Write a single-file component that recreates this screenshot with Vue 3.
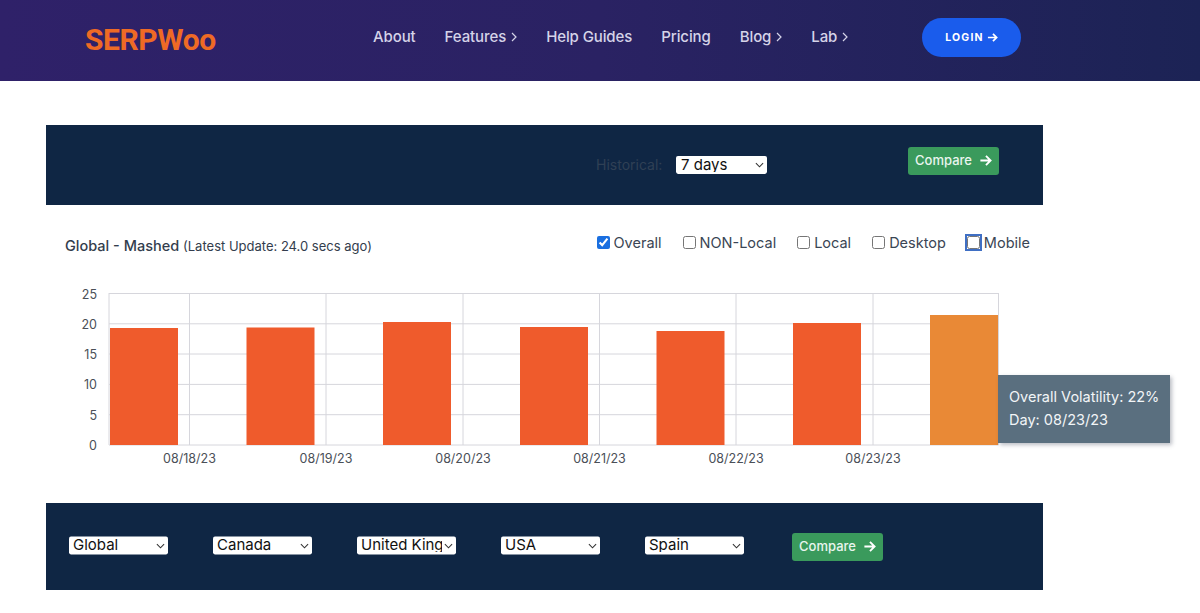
<script setup>
const nav = [
  { label: 'About' },
  { label: 'Features', more: true },
  { label: 'Help Guides' },
  { label: 'Pricing' },
  { label: 'Blog', more: true },
  { label: 'Lab', more: true }
]
const checks = [
  { label: 'Overall', checked: true },
  { label: 'NON-Local' },
  { label: 'Local' },
  { label: 'Desktop' },
  { label: 'Mobile', focus: true }
]
const countries = ['Global', 'Canada', 'United Kingdom', 'USA', 'Spain']
const gridY = [
  { y: 293.5, t: '25' }, { y: 323.8, t: '20' }, { y: 354, t: '15' },
  { y: 384.4, t: '10' }, { y: 414.7, t: '5' }, { y: 445, t: '0' }
]
const gridX = [
  { x: 189.5, t: '08/18/23' }, { x: 326, t: '08/19/23' }, { x: 463, t: '08/20/23' },
  { x: 599.5, t: '08/21/23' }, { x: 736, t: '08/22/23' }, { x: 873, t: '08/23/23' }
]
const bars = [
  { x: 110, top: 328 }, { x: 246.5, top: 327.5 }, { x: 383, top: 322 }, { x: 520, top: 327 },
  { x: 656.5, top: 331 }, { x: 793, top: 323 }, { x: 930, top: 315, hot: true }
]
</script>

<template>
  <div class="page">
    <header class="top">
      <div class="logo">SERPWoo</div>
      <nav class="nav">
        <a v-for="n in nav" :key="n.label" class="nav-link">
          {{ n.label }}
          <svg v-if="n.more" class="caret" viewBox="0 0 6 10" width="6" height="10"><path d="M1 1l4 4-4 4" fill="none" stroke="currentColor" stroke-width="1.2" /></svg>
        </a>
      </nav>
      <button class="login">LOGIN
        <svg viewBox="0 0 12 12" width="11" height="11"><path d="M1 6h9M6.5 2l4 4-4 4" fill="none" stroke="#fff" stroke-width="1.9" /></svg>
      </button>
    </header>

    <main class="main">
      <section class="panel panel-top">
        <span class="hist">Historical:</span>
        <span class="sel sel-hist">
          <select><option>7 days</option></select>
          <svg class="chev" viewBox="0 0 10 6" width="9" height="6"><path d="M1 1l4 4 4-4" fill="none" stroke="#333" stroke-width="1.2" /></svg>
        </span>
        <button class="compare compare-top">Compare
          <svg viewBox="0 0 14 14" width="13" height="13"><path d="M1.5 7h10.5M7.5 2l5 5-5 5" fill="none" stroke="#fff" stroke-width="2" /></svg>
        </button>
      </section>

      <section class="chart-card">
        <div class="chart-head">
          <div class="title">Global - Mashed <small>(Latest Update: 24.0 secs ago)</small></div>
          <div class="checks">
            <label v-for="c in checks" :key="c.label" class="check" :class="{ focus: c.focus }">
              <input type="checkbox" :checked="c.checked" />{{ c.label }}
            </label>
          </div>
        </div>
        <svg class="chart" viewBox="46 280 997 190" width="997" height="190">
          <line v-for="g in gridY" :key="g.t" x1="109" x2="998.5" :y1="g.y" :y2="g.y" class="grid" />
          <line x1="109" x2="109" y1="293" y2="445" class="grid" />
          <line x1="998.5" x2="998.5" y1="293" y2="445" class="grid" />
          <line v-for="g in gridX" :key="g.t" :x1="g.x" :x2="g.x" y1="293" y2="445" class="grid" />
          <rect v-for="b in bars" :key="b.x" :x="b.x" :y="b.top" width="68" :height="445 - b.top" :fill="b.hot ? '#e98936' : '#ef5b2c'" />
          <text v-for="g in gridY" :key="'l' + g.t" x="97" :y="g.y + 5" text-anchor="end" class="tick">{{ g.t }}</text>
          <text v-for="g in gridX" :key="'x' + g.t" :x="g.x" y="463" text-anchor="middle" class="tick">{{ g.t }}</text>
        </svg>
        <div class="tooltip">
          <div>Overall Volatility: 22%</div>
          <div>Day: 08/23/23</div>
        </div>
      </section>

      <section class="panel panel-bottom">
        <span v-for="c in countries" :key="c" class="sel sel-country">
          <select><option>{{ c }}</option></select>
          <svg class="chev" viewBox="0 0 10 6" width="9" height="6"><path d="M1 1l4 4 4-4" fill="none" stroke="#333" stroke-width="1.2" /></svg>
        </span>
        <button class="compare compare-bottom">Compare
          <svg viewBox="0 0 14 14" width="13" height="13"><path d="M1.5 7h10.5M7.5 2l5 5-5 5" fill="none" stroke="#fff" stroke-width="2" /></svg>
        </button>
      </section>
    </main>
  </div>
</template>

<style>
html, body { margin: 0; background: #fff; overflow: hidden; }
</style>

<style scoped>
.page { width: 1200px; height: 613px; font-family: Inter, "Open Sans", sans-serif; color: #333d4d; overflow: hidden; }
.top {
  height: 81px; box-sizing: border-box; display: flex; align-items: center;
  padding-left: 85px;
  background: linear-gradient(90deg, #2f2169 0%, #2a2263 50%, #1c2355 100%);
}
.logo { font-family: Roboto, sans-serif; font-weight: 700; font-size: 30px; color: #ee6a25; width: 288px; letter-spacing: -0.4px; margin-bottom: 2px; }
.nav { display: flex; gap: 29px; margin-bottom: 9px; }
.nav-link { display: flex; align-items: center; gap: 5px; font-size: 15px; font-weight: 500; color: #d5d3e8; white-space: nowrap; letter-spacing: -0.1px; }
.caret { margin-top: 1px; }
.login {
  position: absolute; left: 922px; top: 18px; width: 99px; height: 39px; border: 0; border-radius: 20px;
  background: #1a5cec; color: #fff; font: 700 10.5px Inter, sans-serif; letter-spacing: 1.2px;
  display: flex; align-items: center; justify-content: center; gap: 3px;
}
.main { width: 997px; margin-left: 46px; padding-top: 44px; }
.panel { background: #0f2644; display: flex; align-items: center; box-sizing: border-box; }
.panel-top { height: 80px; padding-left: 550px; }
.hist { font-size: 14px; color: #2f4055; width: 80px; padding-bottom: 1px; }
.sel { position: relative; display: block; }
.sel select {
  display: block; width: 100%; height: 20px; margin: -2px 0 0; box-sizing: border-box; appearance: none; border: 0; border-radius: 2px;
  clip-path: inset(2px 0 0 0 round 2px);
  background: #fff; color: #111; font: 400 15px/1 Inter, sans-serif; padding: 0 14px 0 5px; overflow: hidden;
}
.chev { position: absolute; right: 3.5px; top: 6px; pointer-events: none; }
.sel-hist { width: 91px; height: 18px; }
.compare {
  width: 91px; height: 28px; border: 0; border-radius: 3px; background: #3a9a5c; color: #e9f5ee;
  font: 500 13px Inter, sans-serif; display: flex; align-items: center; justify-content: center; gap: 7px; padding: 0 0 1px;
}
.compare-top { margin-left: 141px; margin-top: -9px; }
.chart-card { position: relative; height: 298px; }
.chart-head { height: 75px; box-sizing: border-box; display: flex; justify-content: space-between; padding: 28px 13px 0 19px; }
.title { font-size: 14.5px; font-weight: 500; color: #333d4d; padding-top: 4px; }
.title small { font-size: 13px; font-weight: 400; }
.checks { display: flex; gap: 21px; font-size: 14.5px; color: #3a4554; }
.check { display: flex; align-items: center; gap: 4px; height: 18px; }
.check input { width: 13px; height: 13px; margin: 0; accent-color: #1a6fe0; }
.check.focus input { outline: 2px solid #3f6fc4; outline-offset: 0; border-radius: 3px; }
.chart { display: block; }
.grid { stroke: #d6d6dc; stroke-width: 1; }
.tick { font: 12.5px Inter, sans-serif; fill: #4a4f57; }
.tooltip {
  position: absolute; left: 952px; top: 170px; width: 172px; height: 68px; box-sizing: border-box;
  background: #5a6f7f; color: #f2f5f7; font-size: 14.5px; line-height: 23px; padding: 10px 11px;
  box-shadow: 2px 2px 4px rgba(60, 70, 90, .35); white-space: nowrap;
}
.panel-bottom { height: 87px; padding-left: 23px; gap: 45px; }
.sel-country { width: 99px; height: 18px; margin-top: -2px; }
.sel-country select { padding-left: 4px; }
.compare-bottom { margin-left: 3px; }
</style>
